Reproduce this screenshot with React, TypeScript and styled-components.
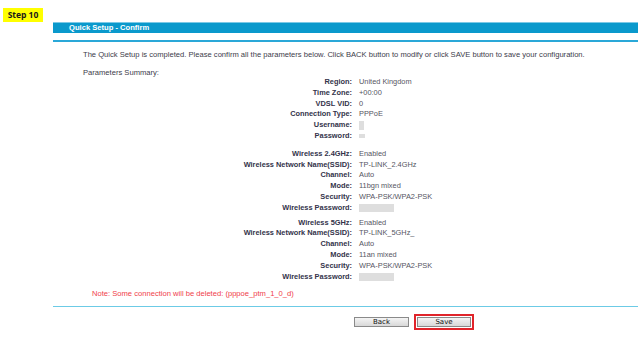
import styled, { createGlobalStyle } from 'styled-components';

const GlobalStyle = createGlobalStyle`
  html, body {
    margin: 0;
    padding: 0;
    background: #ffffff;
  }
  body {
    font-family: 'Liberation Sans', Arial, sans-serif;
  }
`;

type Row = { label: string; value?: string; masked?: [number, number] };

const groups: Row[][] = [
  [
    { label: 'Region:', value: 'United Kingdom' },
    { label: 'Time Zone:', value: '+00:00' },
    { label: 'VDSL VID:', value: '0' },
    { label: 'Connection Type:', value: 'PPPoE' },
    { label: 'Username:', masked: [5, 9] },
    { label: 'Password:', masked: [6, 4] },
  ],
  [
    { label: 'Wireless 2.4GHz:', value: 'Enabled' },
    { label: 'Wireless Network Name(SSID):', value: 'TP-LINK_2.4GHz' },
    { label: 'Channel:', value: 'Auto' },
    { label: 'Mode:', value: '11bgn mixed' },
    { label: 'Security:', value: 'WPA-PSK/WPA2-PSK' },
    { label: 'Wireless Password:', masked: [35, 8] },
  ],
  [
    { label: 'Wireless 5GHz:', value: 'Enabled' },
    { label: 'Wireless Network Name(SSID):', value: 'TP-LINK_5GHz_' },
    { label: 'Channel:', value: 'Auto' },
    { label: 'Mode:', value: '11an mixed' },
    { label: 'Security:', value: 'WPA-PSK/WPA2-PSK' },
    { label: 'Wireless Password:', masked: [35, 8] },
  ],
];

const groupGaps = [-1, 7, 4];

const App = () => {
  return (
    <>
      <GlobalStyle />
      <Page>
        <StepBadge>Step 10</StepBadge>
        <Panel>
          <TitleBar>Quick Setup - Confirm</TitleBar>
          <Divider />
          <Intro>
            The Quick Setup is completed. Please confirm all the parameters below. Click BACK button to
            modify or click SAVE button to save your configuration.
          </Intro>
          <Intro $top={7}>Parameters Summary:</Intro>
          {groups.map((group, gi) => (
            <Summary key={gi} $top={groupGaps[gi]}>
              {group.map((row) => (
                <SummaryRow key={row.label}>
                  <Label>{row.label}</Label>
                  {row.masked ? (
                    <Masked $width={row.masked[0]} $height={row.masked[1]} />
                  ) : (
                    <Value>{row.value}</Value>
                  )}
                </SummaryRow>
              ))}
            </Summary>
          ))}
          <Note>Note: Some connection will be deleted: (pppoe_ptm_1_0_d)</Note>
          <BottomDivider />
          <ButtonRow>
            <Button>Back</Button>
            <SaveFrame>
              <Button $wide>Save</Button>
            </SaveFrame>
          </ButtonRow>
        </Panel>
      </Page>
    </>
  );
};

const Page = styled.div`
  padding-top: 8px;
  width: 640px;
  height: 339px;
  box-sizing: border-box;
  overflow: hidden;
`;

const StepBadge = styled.div`
  margin-left: 3px;
  width: 40px;
  height: 14px;
  line-height: 14px;
  background: #ffff00;
  color: #1a1a1a;
  font-family: 'Open Sans', 'Liberation Sans', sans-serif;
  font-weight: 700;
  font-size: 8.5px;
  text-align: center;
`;

const Panel = styled.div`
  margin-left: 53px;
  margin-right: 2px;
`;

const TitleBar = styled.div`
  height: 10px;
  line-height: 10px;
  background: #0a99cc;
  border-top: 1px solid #7cc9e6;
  color: #ffffff;
  font-weight: 700;
  font-size: 7.6px;
  padding-left: 16px;
`;

const Divider = styled.div`
  margin-top: 7px;
  height: 2px;
  background: #2aa8d8;
`;

const Intro = styled.div<{ $top?: number }>`
  margin-top: ${(p) => p.$top ?? 7}px;
  padding-left: 30px;
  font-size: 7.6px;
  line-height: 11px;
  color: #3c3c4a;
`;

const Summary = styled.div<{ $top: number }>`
  margin-top: ${(p) => p.$top}px;
  display: flex;
  flex-direction: column;
`;

const SummaryRow = styled.div`
  display: grid;
  grid-template-columns: 299px 1fr;
  column-gap: 7px;
  height: 10.8px;
  line-height: 10.8px;
  align-items: center;
  font-size: 7.4px;
`;

const Label = styled.span`
  text-align: right;
  font-weight: 700;
  color: #33334a;
`;

const Value = styled.span`
  color: #55555f;
`;

const Masked = styled.span<{ $width: number; $height: number }>`
  display: block;
  width: ${(p) => p.$width}px;
  height: ${(p) => p.$height}px;
  background: #dedede;
`;

const Note = styled.div`
  margin-top: 5.6px;
  padding-left: 39px;
  font-size: 7.6px;
  line-height: 11px;
  color: #f0404a;
`;

const BottomDivider = styled.div`
  margin-top: 7px;
  height: 1px;
  background: #6ccbe6;
`;

const ButtonRow = styled.div`
  display: flex;
  align-items: center;
  margin-top: 7px;
  padding-left: 301px;
  gap: 5px;
`;

const SaveFrame = styled.div`
  border: 2px solid #e0242a;
  padding: 1px;
`;

const Button = styled.div<{ $wide?: boolean }>`
  width: ${(p) => (p.$wide ? 52 : 53)}px;
  height: 8px;
  line-height: 8px;
  border: 1px solid #8a8a8a;
  background: linear-gradient(#f4f4f4, #d8d8d8);
  color: #111111;
  font-family: 'DejaVu Sans', sans-serif;
  font-size: 7px;
  text-align: center;
`;

export default App;
